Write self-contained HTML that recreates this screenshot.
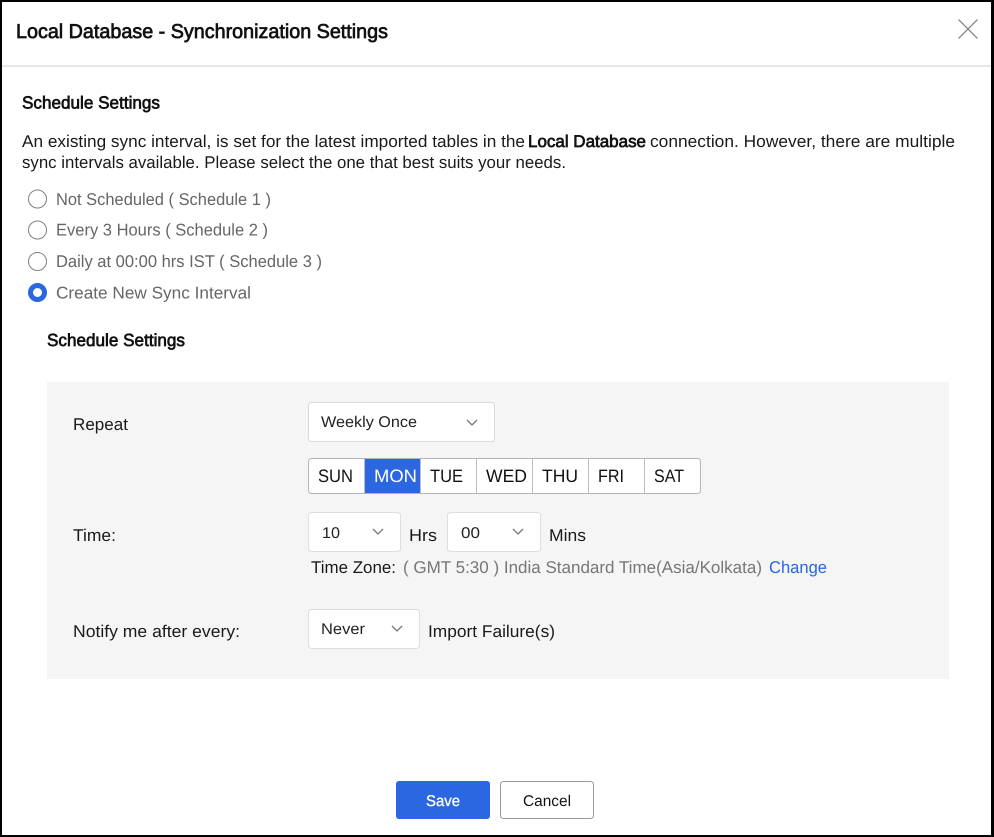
<!DOCTYPE html>
<html lang="en"><head><meta charset="utf-8"><title>Local Database - Synchronization Settings</title>
<style>
html,body{margin:0;padding:0;background:#fff;width:994px;height:837px;overflow:hidden}
svg{position:absolute;left:0;top:0;display:block}
text{font-family:"Liberation Sans",sans-serif;font-size:17px;fill:#1a1a1a;white-space:pre}
.h{font-weight:400;stroke:#111;stroke-width:.7px;fill:#111}
.g{fill:#666}
.s{font-size:15.5px;fill:#222}
.d{font-size:18px;fill:#111}
</style></head><body>
<svg width="994" height="837" viewBox="0 0 994 837" xmlns="http://www.w3.org/2000/svg" text-rendering="geometricPrecision">
<rect width="994" height="837" fill="#000"/>
<rect x="2" y="2" width="989" height="833" fill="#fff"/>
<rect x="2" y="65" width="989" height="2" fill="#e7e7e7"/>
<path d="M958.5 19.500L977.500 38.500M977.500 19.500L958.500 38.500" stroke="#777" stroke-width="1.200" fill="none"/>

<text class="h" x="16" y="38" style="font-size:20px" textLength="372" lengthAdjust="spacingAndGlyphs">Local Database - Synchronization Settings</text>
<text class="h" x="22" y="108.500" style="font-size:17.500px" textLength="138" lengthAdjust="spacingAndGlyphs">Schedule Settings</text>

<text x="22" y="147" textLength="503" lengthAdjust="spacingAndGlyphs">An existing sync interval, is set for the latest imported tables in the</text>
<text class="h" x="528" y="147" textLength="118" lengthAdjust="spacingAndGlyphs">Local Database</text>
<text x="650" y="147" textLength="305" lengthAdjust="spacingAndGlyphs">connection. However, there are multiple</text>
<text x="22" y="168" textLength="544" lengthAdjust="spacingAndGlyphs">sync intervals available. Please select the one that best suits your needs.</text>

<circle cx="37.500" cy="199" r="9" fill="#fff" stroke="#808080" stroke-width="1"/>
<circle cx="37.500" cy="230" r="9" fill="#fff" stroke="#808080" stroke-width="1"/>
<circle cx="37.500" cy="261.500" r="9" fill="#fff" stroke="#808080" stroke-width="1"/>
<circle cx="37.500" cy="292.500" r="7" fill="#fff" stroke="#2a67e0" stroke-width="5"/>
<text class="g" x="56" y="205" textLength="215" lengthAdjust="spacingAndGlyphs">Not Scheduled ( Schedule 1 )</text>
<text class="g" x="56" y="235.500" textLength="212" lengthAdjust="spacingAndGlyphs">Every 3 Hours ( Schedule 2 )</text>
<text class="g" x="56" y="267" textLength="266" lengthAdjust="spacingAndGlyphs">Daily at 00:00 hrs IST ( Schedule 3 )</text>
<text class="g" x="56" y="298.500" textLength="195" lengthAdjust="spacingAndGlyphs">Create New Sync Interval</text>

<text class="h" x="47" y="346" style="font-size:17.500px" textLength="138" lengthAdjust="spacingAndGlyphs">Schedule Settings</text>

<rect x="47" y="382" width="902" height="297" fill="#f5f5f5"/>
<text x="73" y="430" textLength="55" lengthAdjust="spacingAndGlyphs">Repeat</text>

<rect x="308.500" y="402.500" width="186" height="39" rx="3" fill="#fff" stroke="#d9d9d9"/>
<text class="s" x="321" y="427" textLength="96" lengthAdjust="spacingAndGlyphs">Weekly Once</text>
<path d="M467 420l5 5 5-5" fill="none" stroke="#777" stroke-width="1.300"/>

<rect x="308.500" y="458.500" width="392" height="35" rx="3" fill="#fff" stroke="#b5b5b5"/>
<rect x="365" y="459" width="56" height="34" fill="#2a67e0"/>
<path d="M364.500 459v34M420.500 459v34M476.500 459v34M532.500 459v34M588.500 459v34M644.500 459v34" stroke="#bdbdbd" fill="none"/>
<text class="d" x="318" y="482" textLength="35" lengthAdjust="spacingAndGlyphs">SUN</text>
<text class="d" x="374" y="482" textLength="43" lengthAdjust="spacingAndGlyphs" style="fill:#fff">MON</text>
<text class="d" x="430" y="482" textLength="33" lengthAdjust="spacingAndGlyphs">TUE</text>
<text class="d" x="486" y="482" textLength="41" lengthAdjust="spacingAndGlyphs">WED</text>
<text class="d" x="542" y="482" textLength="36" lengthAdjust="spacingAndGlyphs">THU</text>
<text class="d" x="598" y="482" textLength="26" lengthAdjust="spacingAndGlyphs">FRI</text>
<text class="d" x="654" y="482" textLength="30" lengthAdjust="spacingAndGlyphs">SAT</text>

<text x="73" y="541" textLength="43" lengthAdjust="spacingAndGlyphs">Time:</text>
<rect x="308.500" y="512.500" width="92" height="39" rx="3" fill="#fff" stroke="#dedede"/>
<text class="s" x="322" y="538" textLength="18" lengthAdjust="spacingAndGlyphs">10</text>
<path d="M373 529l5 5 5-5" fill="none" stroke="#777" stroke-width="1.300"/>
<text x="409" y="541" textLength="28" lengthAdjust="spacingAndGlyphs">Hrs</text>
<rect x="447.500" y="512.500" width="93" height="39" rx="3" fill="#fff" stroke="#dedede"/>
<text class="s" x="461" y="538" textLength="19" lengthAdjust="spacingAndGlyphs">00</text>
<path d="M513 529l5 5 5-5" fill="none" stroke="#777" stroke-width="1.300"/>
<text x="549" y="541" textLength="37" lengthAdjust="spacingAndGlyphs">Mins</text>

<text x="311" y="573" textLength="85" lengthAdjust="spacingAndGlyphs">Time Zone:</text>
<text x="403" y="573" textLength="359" lengthAdjust="spacingAndGlyphs" style="fill:#777">( GMT 5:30 ) India Standard Time(Asia/Kolkata)</text>
<text x="769" y="573" textLength="58" lengthAdjust="spacingAndGlyphs" style="fill:#2a67e0">Change</text>

<text x="73" y="637" textLength="167" lengthAdjust="spacingAndGlyphs">Notify me after every:</text>
<rect x="308.500" y="609.500" width="111" height="39" rx="3" fill="#fff" stroke="#dedede"/>
<text class="s" x="321" y="634" textLength="44" lengthAdjust="spacingAndGlyphs">Never</text>
<path d="M392 626l5 5 5-5" fill="none" stroke="#777" stroke-width="1.300"/>
<text x="428" y="637" textLength="127" lengthAdjust="spacingAndGlyphs">Import Failure(s)</text>

<rect x="396" y="781" width="94" height="38" rx="3" fill="#2a67e0"/>
<text x="426" y="806" textLength="34" lengthAdjust="spacingAndGlyphs" style="font-size:15.500px;fill:#fff;stroke:#fff;stroke-width:.3px">Save</text>
<rect x="500.500" y="781.500" width="93" height="37" rx="3" fill="#fff" stroke="#999"/>
<text x="523" y="806" textLength="48" lengthAdjust="spacingAndGlyphs" style="font-size:15.500px;fill:#111">Cancel</text>
</svg>
</body></html>
